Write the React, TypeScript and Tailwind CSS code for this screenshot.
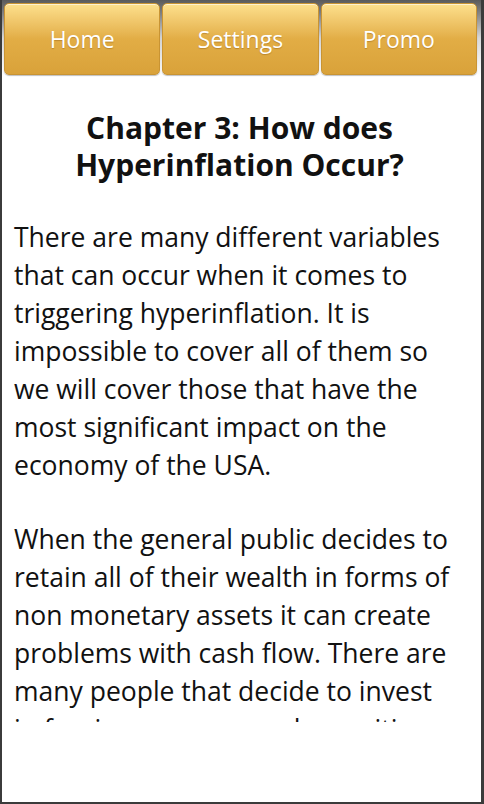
import React from 'react'

const tabs = ['Home', 'Settings', 'Promo']

export default function App() {
  return (
    <div className="w-[484px] h-[804px] bg-[#3b3b3b] pl-[2px] pr-[3px] pb-[2px] font-['Open_Sans','Noto_Sans',sans-serif]">
      <div className="flex h-full flex-col bg-white">
        {/* top tab buttons */}
        <div className="flex h-[76px] gap-[2px] bg-gradient-to-b from-[#5a5a5a] via-[#d8d8d8] to-white pl-[2px] pr-[4px] pt-[3px] pb-[1px]">
          {tabs.map((t) => (
            <button
              key={t}
              className="flex flex-1 items-center justify-center rounded-[5px] border border-[#c99433] bg-gradient-to-b from-[#fde08c] via-[#e2ad45] to-[#d9a23a] text-[23px] text-white shadow-[inset_0_1px_0_rgba(255,255,255,0.6),0_1px_1px_rgba(0,0,0,0.25)] [text-shadow:0_1px_1px_rgba(120,70,0,0.35)]"
            >
              {t}
            </button>
          ))}
        </div>

        {/* chapter text */}
        <div className="h-[646px] overflow-hidden pl-[12px] pr-[20px] text-[#111]">
          <h1 className="mt-[33px] pl-[4px] text-center text-[30px] font-bold leading-[37px]">
            Chapter 3: How does
            <br />
            Hyperinflation Occur?
          </h1>
          <p className="mt-[35px] text-[26.5px] leading-[38px]">
            There are many different variables that can occur when it comes to triggering hyperinflation. It is
            impossible to cover all of them so we will cover those that have the most significant impact on the
            economy of the USA.
          </p>
          <p className="mt-[36px] text-[26.5px] leading-[38px]">
            When the general public decides to retain all of their wealth in forms of non monetary assets it can
            create problems with cash flow. There are many people that decide to invest in foreign currency and
            securities with the hope of protecting their money.
          </p>
        </div>
      </div>
    </div>
  )
}
